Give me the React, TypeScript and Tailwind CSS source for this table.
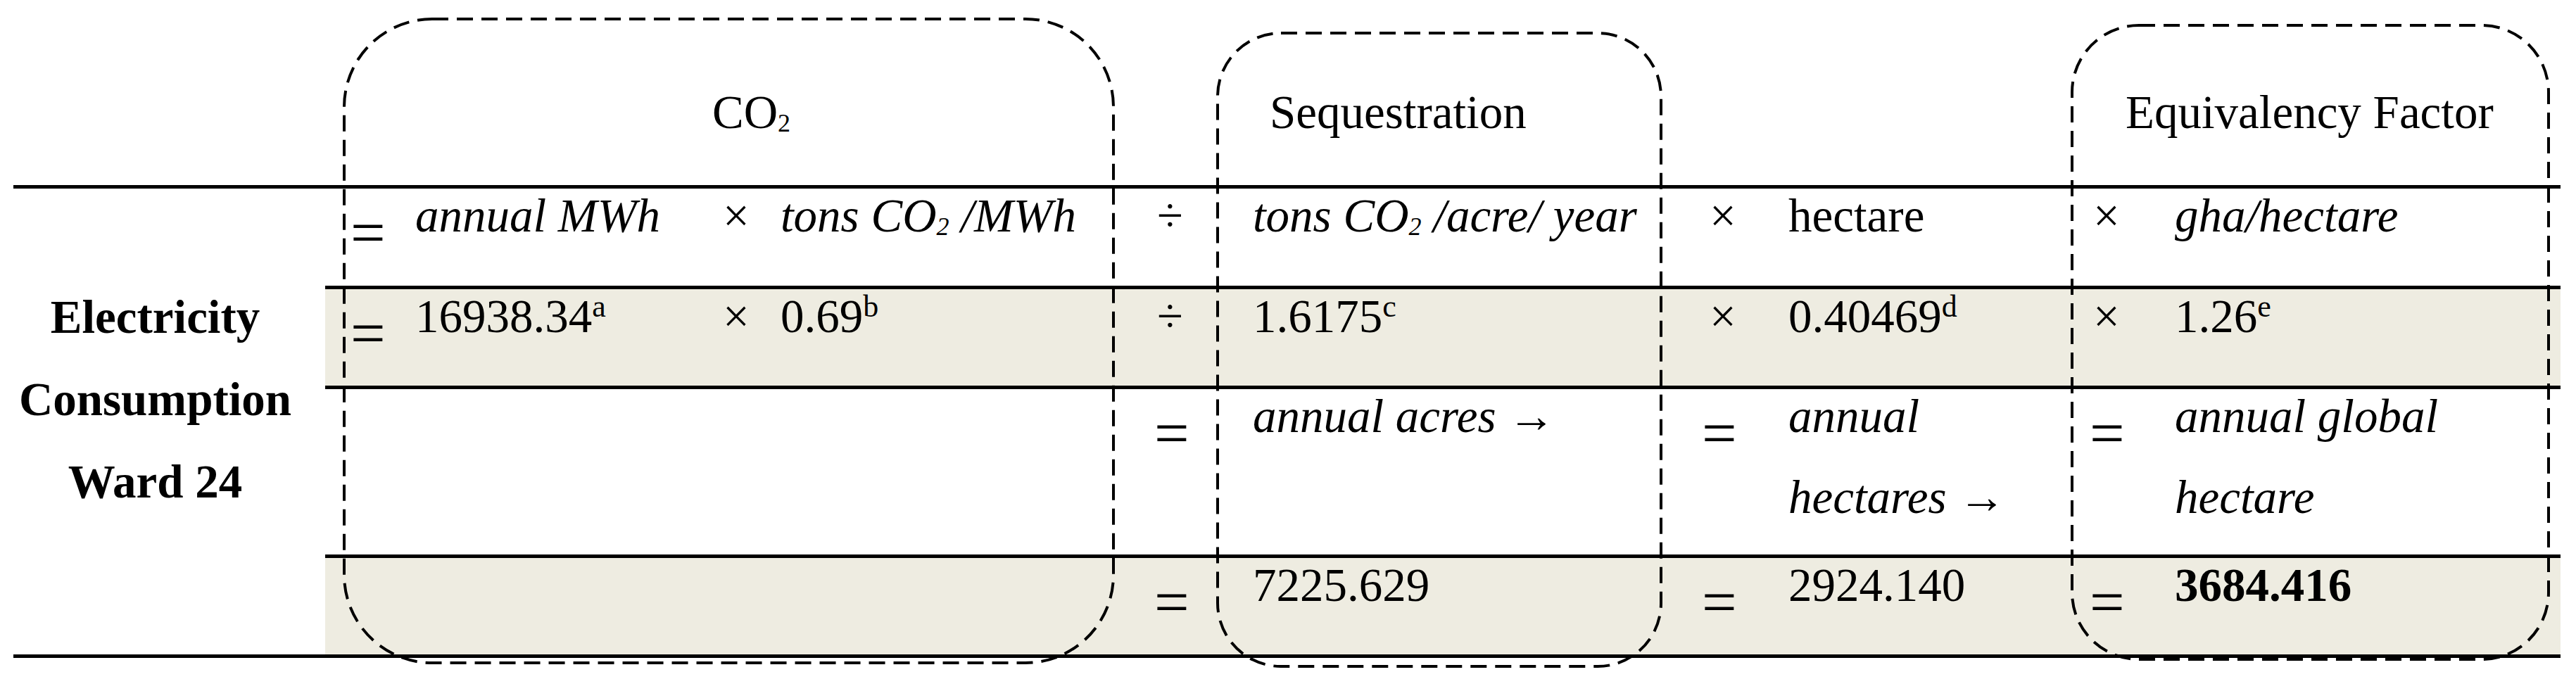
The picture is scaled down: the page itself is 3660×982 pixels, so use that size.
import React from 'react'

function Eq({ className = '' }: { className?: string }) {
    return (
        <span className={'inline-block shrink-0 translate-y-[24px] text-[88px] leading-[77px] ' + className}>
            =
        </span>
    )
}

function Op({ className = '', children }: { className?: string; children: React.ReactNode }) {
    return <span className={'inline-block shrink-0 ' + className}>{children}</span>
}

export default function App() {
    return (
        <div className="relative h-[982px] w-[3660px] overflow-hidden bg-white pl-[19px] font-['Liberation_Serif','Times_New_Roman',serif] text-[67px] text-black">
            {/* header labels */}
            <div className="flex h-[263px] w-[3619px] pt-[121px] leading-[77px]">
                <div className="w-[443px]" />
                <div className="w-[1128px] pl-[550px]">
                    CO<sub className="-bottom-[5px] text-[36px]">2</sub>
                </div>
                <div className="w-[800px] pl-[214px]">Sequestration</div>
                <div className="w-[554px]" />
                <div className="w-[694px] pl-[76px]">Equivalency Factor</div>
            </div>

            {/* table */}
            <div className="flex w-[3619px] border-y-[5px] border-black leading-[77px]">
                <div className="flex w-[443px] flex-col items-center gap-[40px] pr-[40px] pt-[144px] font-bold">
                    <div>Electricity</div>
                    <div>Consumption</div>
                    <div>Ward 24</div>
                </div>

                <div className="flex w-[3176px] flex-col">
                    {/* formula */}
                    <div className="flex h-[138px]">
                        <div className="flex w-[538px] items-start">
                            <Eq className="ml-[36px] w-[92px]" />
                            <i>annual MWh</i>
                        </div>
                        <div className="flex w-[590px] items-start">
                            <Op className="ml-[27px] w-[82px]">×</Op>
                            <i>
                                tons CO<sub className="-bottom-[5px] text-[36px]">2</sub> /MWh
                            </i>
                        </div>
                        <div className="flex w-[140px] items-start">
                            <Op className="ml-[54px]">÷</Op>
                        </div>
                        <div className="flex w-[660px] items-start">
                            <i className="ml-[50px]">
                                tons CO<sub className="-bottom-[5px] text-[36px]">2</sub> /acre/ year
                            </i>
                        </div>
                        <div className="flex w-[554px] items-start">
                            <Op className="ml-[39px] w-[112px]">×</Op>
                            <span>hectare</span>
                        </div>
                        <div className="flex w-[694px] items-start">
                            <Op className="ml-[30px] w-[116px]">×</Op>
                            <i>gha/hectare</i>
                        </div>
                    </div>

                    {/* values */}
                    <div className="flex h-[142px] border-t-[5px] border-black bg-[#EEECE1]">
                        <div className="flex w-[538px] items-start">
                            <Eq className="ml-[36px] w-[92px]" />
                            <span>
                                16938.34<sup className="text-[44px]">a</sup>
                            </span>
                        </div>
                        <div className="flex w-[590px] items-start">
                            <Op className="ml-[27px] w-[82px]">×</Op>
                            <span>
                                0.69<sup className="text-[44px]">b</sup>
                            </span>
                        </div>
                        <div className="flex w-[140px] items-start">
                            <Op className="ml-[54px]">÷</Op>
                        </div>
                        <div className="flex w-[660px] items-start">
                            <span className="ml-[50px]">
                                1.6175<sup className="text-[44px]">c</sup>
                            </span>
                        </div>
                        <div className="flex w-[554px] items-start">
                            <Op className="ml-[39px] w-[112px]">×</Op>
                            <span>
                                0.40469<sup className="text-[44px]">d</sup>
                            </span>
                        </div>
                        <div className="flex w-[694px] items-start">
                            <Op className="ml-[30px] w-[116px]">×</Op>
                            <span>
                                1.26<sup className="text-[44px]">e</sup>
                            </span>
                        </div>
                    </div>

                    {/* result labels */}
                    <div className="flex h-[240px] border-t-[5px] border-black">
                        <div className="w-[538px]" />
                        <div className="w-[590px]" />
                        <div className="flex w-[140px] items-start">
                            <Eq className="ml-[50px]" />
                        </div>
                        <div className="flex w-[660px] items-start">
                            <i className="ml-[50px]">annual acres →</i>
                        </div>
                        <div className="flex w-[554px] items-start">
                            <Eq className="ml-[28px] w-[123px]" />
                            <div className="flex flex-col gap-[38px] italic">
                                <span>annual</span>
                                <span>hectares →</span>
                            </div>
                        </div>
                        <div className="flex w-[694px] items-start">
                            <Eq className="ml-[25px] w-[121px]" />
                            <div className="flex flex-col gap-[38px] italic">
                                <span>annual global</span>
                                <span>hectare</span>
                            </div>
                        </div>
                    </div>

                    {/* results */}
                    <div className="flex h-[142px] border-t-[5px] border-black bg-[#EEECE1]">
                        <div className="w-[538px]" />
                        <div className="w-[590px]" />
                        <div className="flex w-[140px] items-start">
                            <Eq className="ml-[50px]" />
                        </div>
                        <div className="flex w-[660px] items-start">
                            <span className="ml-[50px]">7225.629</span>
                        </div>
                        <div className="flex w-[554px] items-start">
                            <Eq className="ml-[28px] w-[123px]" />
                            <span>2924.140</span>
                        </div>
                        <div className="flex w-[694px] items-start">
                            <Eq className="ml-[25px] w-[121px]" />
                            <b>3684.416</b>
                        </div>
                    </div>
                </div>
            </div>

            {/* dashed grouping outlines */}
            <svg
                className="pointer-events-none absolute left-0 top-0"
                width="3660"
                height="982"
                fill="none"
                stroke="black"
                strokeWidth="4"
                strokeDasharray="23 12"
            >
                <rect x="489" y="27" width="1093" height="915" rx="125" />
                <rect x="1730" y="47" width="630" height="900" rx="90" />
                <rect x="2944" y="36" width="677" height="901" rx="95" />
            </svg>
        </div>
    )
}
